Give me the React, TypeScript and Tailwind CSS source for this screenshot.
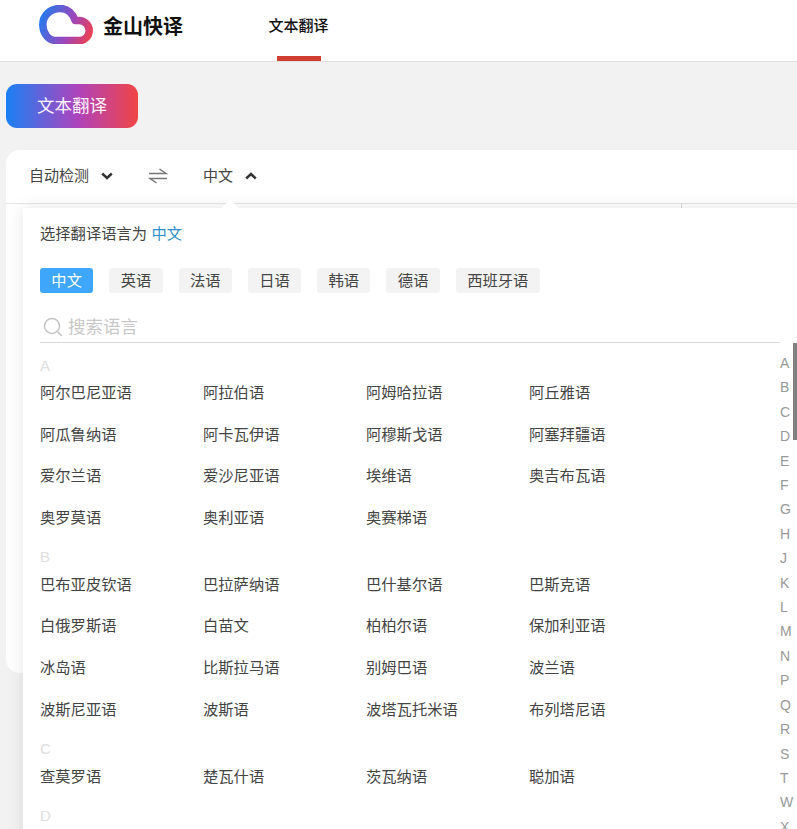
import React from "react";

const groups: { letter: string; rows: string[][] }[] = [
  {
    letter: "A",
    rows: [
      ["阿尔巴尼亚语", "阿拉伯语", "阿姆哈拉语", "阿丘雅语"],
      ["阿瓜鲁纳语", "阿卡瓦伊语", "阿穆斯戈语", "阿塞拜疆语"],
      ["爱尔兰语", "爱沙尼亚语", "埃维语", "奥吉布瓦语"],
      ["奥罗莫语", "奥利亚语", "奥赛梯语"],
    ],
  },
  {
    letter: "B",
    rows: [
      ["巴布亚皮钦语", "巴拉萨纳语", "巴什基尔语", "巴斯克语"],
      ["白俄罗斯语", "白苗文", "柏柏尔语", "保加利亚语"],
      ["冰岛语", "比斯拉马语", "别姆巴语", "波兰语"],
      ["波斯尼亚语", "波斯语", "波塔瓦托米语", "布列塔尼语"],
    ],
  },
  { letter: "C", rows: [["查莫罗语", "楚瓦什语", "茨瓦纳语", "聪加语"]] },
  { letter: "D", rows: [] },
];

const quick = ["英语", "法语", "日语", "韩语", "德语", "西班牙语"];
const letters = "ABCDEFGHJKLMNPQRSTWX".split("");

function Cloud() {
  return (
    <svg width="54" height="39" viewBox="0 0 54 39" fill="none">
      <defs>
        <linearGradient id="cloudG" x1="0" y1="8" x2="54" y2="30" gradientUnits="userSpaceOnUse">
          <stop offset="0" stopColor="#1a7ff2" />
          <stop offset="0.6" stopColor="#a045b8" />
          <stop offset="1" stopColor="#f0404c" />
        </linearGradient>
      </defs>
      <path
        d="M17 35.500C9 35.500 3.800 28 3.800 19.500C3.800 10.500 11.500 3.500 21 3.500C29 3.500 34 9 36 15.500C37 15.500 38 15.500 40 15.500C46 15.500 50.200 20.500 50.200 25.500C50.200 31 46 35.500 41 35.500Z"
        stroke="url(#cloudG)"
        strokeWidth="7.500"
        strokeLinejoin="round"
      />
    </svg>
  );
}

export default function App() {
  return (
    <div className="relative h-[829px] w-[797px] overflow-hidden bg-[#f2f2f3] font-['Noto_Sans_CJK_SC','Noto_Sans',sans-serif] text-[#444]">
      <header className="flex h-[62px] items-start border-b border-[#e0e0e0] bg-white">
        <div className="ml-[39px] mt-[5px]">
          <Cloud />
        </div>
        <span className="ml-[10px] mt-[16px] text-[20px] font-bold leading-[20px] text-[#111]">金山快译</span>
        <div className="relative ml-[85px] flex h-full w-[61px] items-start justify-center">
          <span className="mt-[15px] whitespace-nowrap text-[15px] font-medium leading-[20px] text-[#111]">文本翻译</span>
          <span className="absolute bottom-0 left-[9px] h-[5px] w-[44px] bg-[#cf3e30]" />
        </div>
      </header>

      <div className="px-[6px] pt-[22px]">
        <button className="h-[44px] w-[132px] rounded-[11px] bg-[linear-gradient(90deg,#1a80f5_0%,#b043bb_55%,#f04545_100%)] pb-[2px] text-[17.500px] text-[#fdf3ff]">
          文本翻译
        </button>

        <div className="relative mt-[22px] h-[523px] w-[820px] rounded-[14px] bg-white">
          <div className="relative flex h-[54px] items-center border-b border-[#e6e6e6] pb-[2px] pl-[23px] text-[15px]">
            <span>自动检测</span>
            <svg className="ml-[12px]" width="12" height="8" viewBox="0 0 12 8" fill="none">
              <path d="M1.200 1.500L6 6L10.800 1.500" stroke="#333" strokeWidth="2.400" />
            </svg>
            <svg className="ml-[35px]" width="20" height="16" viewBox="0 0 20 16" fill="none">
              <path d="M1 5.500H18L11.500 1M19 10.500H2L8.500 15" stroke="#777" strokeWidth="1.500" />
            </svg>
            <span className="ml-[35px]">中文</span>
            <svg className="ml-[12px]" width="12" height="8" viewBox="0 0 12 8" fill="none">
              <path d="M1.200 6.500L6 2L10.800 6.500" stroke="#333" strokeWidth="2.400" />
            </svg>
            <span className="absolute bottom-[-6px] left-[675px] h-[6px] w-px bg-[#dcdcdc]" />
          </div>
        </div>
      </div>

      <div className="absolute left-[23px] top-[208px] h-[640px] w-[790px] bg-white pl-[17px] pt-[14px] shadow-[0_0_16px_rgba(0,0,0,0.1)]">
        <span className="absolute left-[201px] top-[-6px] h-[12px] w-[12px] rotate-45 bg-white" />
        <div className="text-[15.300px] leading-[20px]">
          选择翻译语言为 <span className="ml-[1px] text-[#2b8fc9]">中文</span>
        </div>
        <div className="mt-[26px] flex gap-[16px] text-[15.300px]">
          <span className="flex h-[25px] w-[53.300px] items-center justify-center rounded-[3px] bg-[#3ea6fb] pb-[2px] text-white">中文</span>
          {quick.map((q) => (
            <span key={q} className="flex h-[25px] items-center justify-center rounded-[3px] bg-[#f3f3f3] px-[11.350px] pb-[2px]">
              {q}
            </span>
          ))}
        </div>
        <div className="mt-[12px] flex h-[38px] w-[740px] items-center border-b border-[#d9d9d9] pl-[2px] pt-[6px]">
          <svg width="22" height="22" viewBox="0 0 22 22" fill="none">
            <circle cx="10" cy="10" r="7.500" stroke="#c4c4c4" strokeWidth="1.500" />
            <path d="M15.500 15.500L20 20" stroke="#c4c4c4" strokeWidth="1.500" />
          </svg>
          <span className="ml-[4px] text-[17.500px] text-[#c8c8c8]">搜索语言</span>
        </div>
        <div className="mt-[12px]">
          {groups.map((g) => (
            <div key={g.letter}>
              <div className="flex h-[20px] items-center font-['Liberation_Sans',sans-serif] text-[15px] leading-none text-[#dedede]">{g.letter}</div>
              <div className="mt-[5px]">
                {g.rows.map((r, i) => (
                  <div key={i} className="grid h-[41.700px] w-[652px] grid-cols-4 pt-[1px] text-[15.300px] leading-[20px]">
                    {r.map((n) => (
                      <span key={n} className="whitespace-nowrap">{n}</span>
                    ))}
                  </div>
                ))}
              </div>
            </div>
          ))}
        </div>
      </div>

      <div className="absolute left-[780px] top-[351px] flex flex-col font-['Liberation_Sans',sans-serif] text-[14px] leading-[24.400px] text-[#999]">
        {letters.map((l) => (
          <span key={l}>{l}</span>
        ))}
      </div>
      <div className="absolute left-[793px] top-[343px] h-[97px] w-[4px] bg-[#808080]" />
    </div>
  );
}
